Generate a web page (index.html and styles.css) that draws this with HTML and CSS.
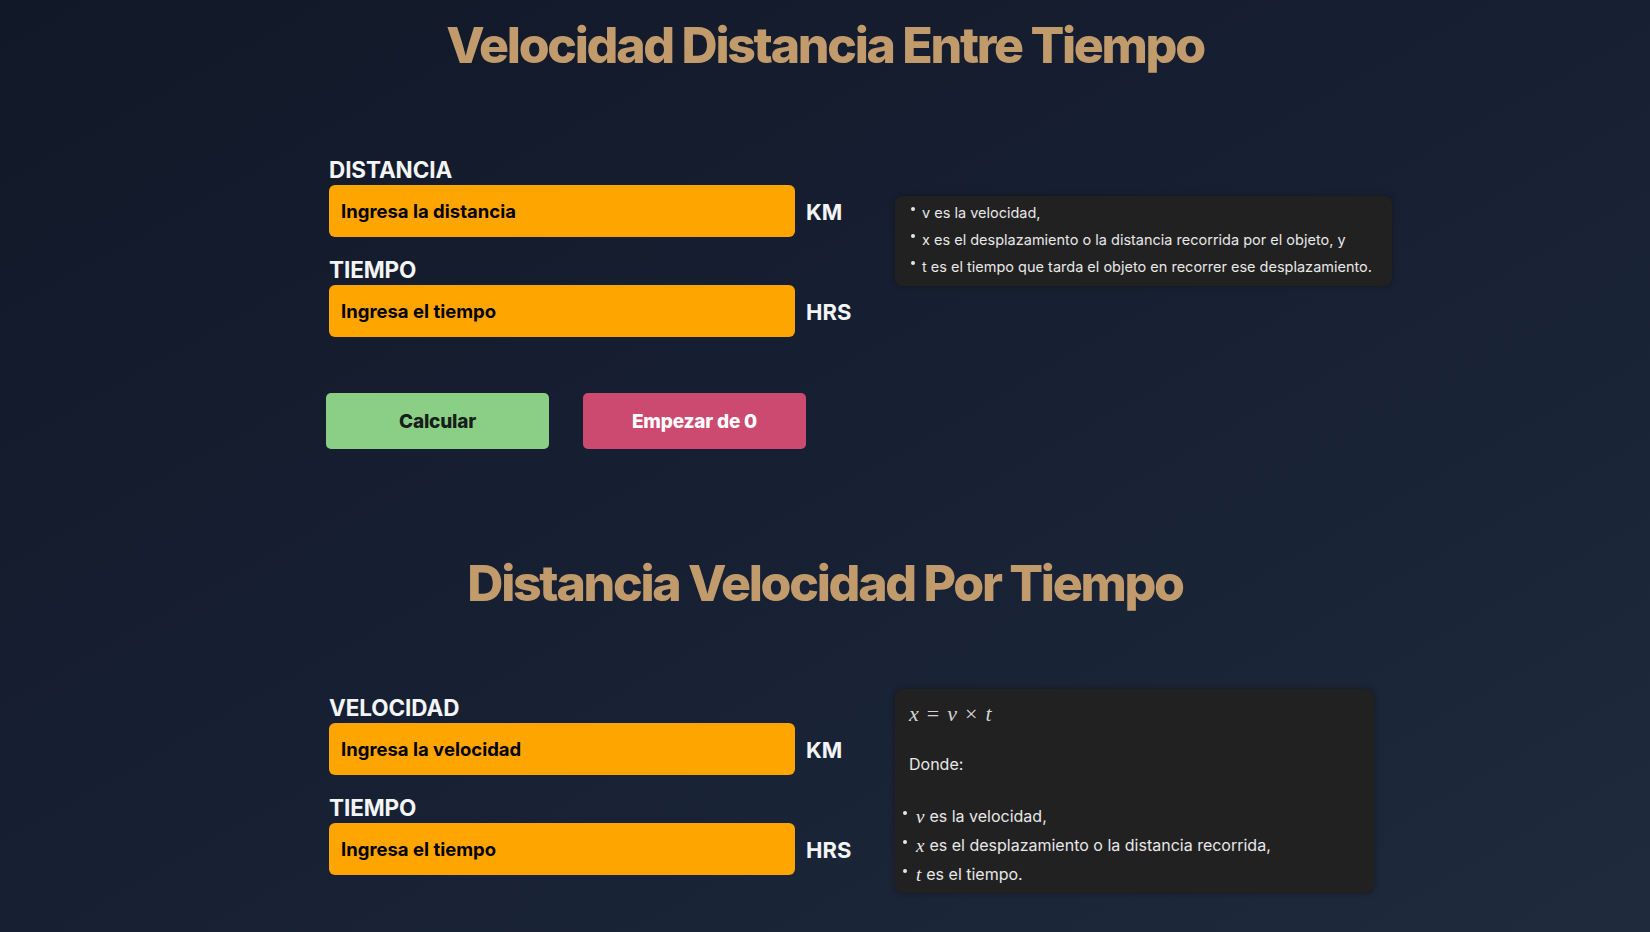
FILE: index.html
```html
<!DOCTYPE html>
<html lang="es">
<head>
<meta charset="utf-8">
<title>Velocidad y Distancia</title>
<link rel="stylesheet" href="styles.css">
</head>
<body>
<main class="page">
  <section class="calc calc-first">
    <h1 class="title">Velocidad Distancia Entre Tiempo</h1>
    <div class="calc-body">
      <div class="fields">
        <label class="field-label">DISTANCIA</label>
        <div class="field-row">
          <input class="field-input" type="text" placeholder="Ingresa la distancia">
          <span class="unit">KM</span>
        </div>
        <label class="field-label">TIEMPO</label>
        <div class="field-row">
          <input class="field-input" type="text" placeholder="Ingresa el tiempo">
          <span class="unit">HRS</span>
        </div>
      </div>
      <div class="note note-sm">
        <ul class="note-list">
          <li>v es la velocidad,</li>
          <li>x es el desplazamiento o la distancia recorrida por el objeto, y</li>
          <li>t es el tiempo que tarda el objeto en recorrer ese desplazamiento.</li>
        </ul>
      </div>
    </div>
    <div class="actions">
      <button class="btn btn-calc" type="button">Calcular</button>
      <button class="btn btn-reset" type="button">Empezar de 0</button>
    </div>
  </section>

  <section class="calc calc-second">
    <h1 class="title">Distancia Velocidad Por Tiempo</h1>
    <div class="calc-body">
      <div class="fields">
        <label class="field-label">VELOCIDAD</label>
        <div class="field-row">
          <input class="field-input" type="text" placeholder="Ingresa la velocidad">
          <span class="unit">KM</span>
        </div>
        <label class="field-label">TIEMPO</label>
        <div class="field-row">
          <input class="field-input" type="text" placeholder="Ingresa el tiempo">
          <span class="unit">HRS</span>
        </div>
      </div>
      <div class="note note-lg">
        <p class="formula"><i>x</i><span class="op">=</span><i>v</i><span class="op">×</span><i>t</i></p>
        <p class="donde">Donde:</p>
        <ul class="note-list">
          <li><i class="var">v</i> es la velocidad,</li>
          <li><i class="var">x</i> es el desplazamiento o la distancia recorrida,</li>
          <li><i class="var">t</i> es el tiempo.</li>
        </ul>
      </div>
    </div>
  </section>
</main>
</body>
</html>
```

FILE: styles.css
```css
* { box-sizing: border-box; }

html, body {
  margin: 0;
  height: 100%;
}

body {
  background: linear-gradient(to bottom right, #111827 0%, #172033 50%, #1f2a3d 100%);
  font-family: Inter, "Liberation Sans", sans-serif;
  color: #f3f4f6;
  overflow: hidden;
}

.page {
  padding-top: 15px;
}

.title {
  margin: 0;
  text-align: center;
  font-size: 50px;
  line-height: 60px;
  font-weight: 800;
  letter-spacing: -2.3px;
  color: #c29b6c;
}

.calc-body {
  display: grid;
  grid-template-columns: 526px auto;
  column-gap: 40px;
  align-items: start;
  margin: 82px 0 0 329px;
}

.calc-second {
  margin-top: 104px;
}

.fields {
  display: flex;
  flex-direction: column;
}

.field-label {
  display: block;
  font-size: 22.5px;
  line-height: 26px;
  font-weight: 700;
  letter-spacing: -0.1px;
  color: #f3f4f6;
  margin-top: 20px;
}

.field-label:first-child {
  margin-top: 0;
}

.field-row {
  display: flex;
  align-items: center;
  gap: 11px;
  margin-top: 2px;
}

.field-input {
  width: 466px;
  height: 52px;
  border: none;
  border-radius: 6px;
  background: #ffa500;
  padding: 0 12px;
  font-family: Inter, "Liberation Sans", sans-serif;
  font-size: 18.5px;
  font-weight: 700;
  color: #000;
  outline: none;
}

.field-input::placeholder {
  color: #000;
  opacity: 1;
}

.unit {
  font-size: 22px;
  font-weight: 700;
  color: #f3f4f6;
  padding-top: 2px;
}

.actions {
  display: flex;
  gap: 34px;
  margin: 56px 0 0 326px;
}

.btn {
  width: 223px;
  height: 56px;
  border: none;
  border-radius: 5px;
  font-family: Inter, "Liberation Sans", sans-serif;
  font-size: 19px;
  font-weight: 800;
  letter-spacing: -0.2px;
}

.btn-calc {
  background: #8bcf86;
  color: #16201a;
}

.btn-reset {
  background: #cc4a6f;
  color: #fff;
}

.note {
  background: #212121;
  border-radius: 8px;
  box-shadow: 0 0 4px 1px rgba(20, 20, 20, 0.5);
  color: #e8e8e8;
}

.note-sm {
  width: 497px;
  padding: 3px 16px 6px 16px;
  font-size: 14.5px;
  margin-top: 39px;
}

.note-sm .note-list li {
  line-height: 27px;
}

.note-list {
  list-style: none;
  margin: 0;
  padding: 0;
}

.note-list li {
  display: flex;
  align-items: center;
  white-space: nowrap;
}

.note-list li::before {
  content: "";
  width: 4px;
  height: 4px;
  border-radius: 50%;
  background: #e8e8e8;
  margin-right: 7px;
  transform: translateY(-4px);
  flex: none;
}

.note-lg {
  width: 479px;
  padding: 11px 16px 4px 8px;
  font-size: 16px;
  margin-top: -6px;
}

.formula {
  margin: 0 0 0 6px;
  line-height: 28px;
  font-family: "Liberation Serif", "DejaVu Serif", serif;
  font-size: 22px;
  color: #d4d4d4;
}

.formula .op {
  font-style: normal;
  margin: 0 8px;
}

.donde {
  margin: 22px 0 0 6px;
  line-height: 28px;
}

.note-lg .note-list {
  margin-top: 24px;
}

.note-lg .note-list li {
  line-height: 29px;
}

.note-lg .note-list li::before {
  margin-right: 9px;
}

.var {
  font-family: "Liberation Serif", "DejaVu Serif", serif;
  font-size: 19px;
  margin-right: 5px;
}
```
